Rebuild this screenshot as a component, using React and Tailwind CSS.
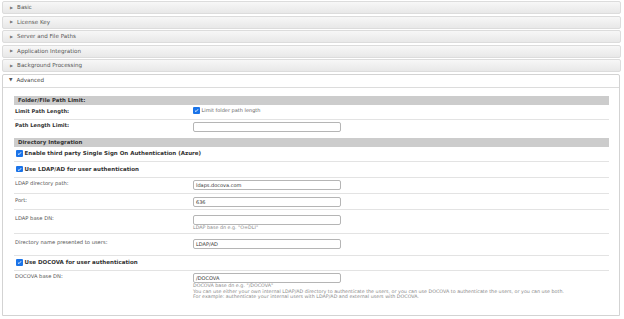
import React from 'react';

const font = { fontFamily: '"DejaVu Sans", Verdana, sans-serif' };

const sections = ['Basic', 'License Key', 'Server and File Paths', 'Application Integration', 'Background Processing'];

// small chrome-like checked box
const Check = () => (
  <span className="inline-flex items-center justify-center w-[6.5px] h-[6.5px] rounded-[1px] bg-[#1a73e8] mr-[2px] shrink-0">
    <svg viewBox="0 0 8 8" className="w-[5px] h-[5px]">
      <path d="M1.5 4.2 L3.2 5.8 L6.5 2" stroke="white" strokeWidth="1.4" fill="none" />
    </svg>
  </span>
);

const Input = ({ value }) => (
  <div className="w-[148px] h-[10px] border border-[#b5b5b5] rounded-[2px] bg-white text-[5px] leading-[8px] pl-[2px] text-[#333]">
    {value}
  </div>
);

const SubHeader = ({ children, h }) => (
  <div className={`bg-[#cccccc] text-[5.4px] font-bold text-[#333] pl-[4px] flex items-center ${h}`}>{children}</div>
);

const Row = ({ label, bold, children, h, pt, border = true }) => (
  <div className={`flex ${h} ${border ? 'border-b border-[#e3e3e3]' : ''}`}>
    <div className={`w-[179px] pl-[1px] ${pt} text-[5.2px] leading-[6px] ${bold ? 'font-bold text-[#333]' : 'text-[#555]'}`}>
      {label}
    </div>
    <div className={`flex-1 ${pt}`}>{children}</div>
  </div>
);

const CheckRow = ({ label, h }) => (
  <div className={`flex items-center ${h} border-b border-[#e3e3e3] pl-[2px]`}>
    <Check />
    <span className="text-[5.5px] font-bold text-[#333]">{label}</span>
  </div>
);

const Hint = ({ children }) => <div className="text-[4.8px] leading-[5.7px] text-[#888] whitespace-nowrap">{children}</div>;

export default function App() {
  return (
    <div className="w-[624px] h-[319px] bg-white pt-[1px] pl-[2px] pr-[3px]" style={font}>
      <div className="flex flex-col gap-[1.5px]">
        {sections.map((s) => (
          <div
            key={s}
            className="h-[13px] border border-[#dcdcdc] rounded-[2px] bg-gradient-to-b from-[#f7f7f7] to-[#e8e8e8] flex items-center pl-[7px] text-[5.6px] text-[#555]"
          >
            <span className="text-[4px] mr-[4px] text-[#777]">▶</span>
            {s}
          </div>
        ))}
      </div>
      <div className="mt-[1.5px] mr-[1px] border border-[#d3d3d3] rounded-t-[2px]">
        <div className="h-[13px] border-b border-[#dcdcdc] flex items-center pl-[6px] text-[5.6px] text-[#444]">
          <span className="text-[4.5px] mr-[4px] text-[#555]">▼</span>
          Advanced
        </div>
        <div className="pl-[11px] pr-[10px] pt-[8px] h-[227px]">
          <SubHeader h="h-[9px]">Folder/File Path Limit:</SubHeader>
          <Row label="Limit Path Length:" bold h="h-[15px]" pt="pt-[3px]">
            <div className="flex items-center h-[6px]">
              <Check />
              <span className="text-[5px] text-[#666]">Limit folder path length</span>
            </div>
          </Row>
          <Row label="Path Length Limit:" bold h="h-[18px]" pt="pt-[2px]" border={false}>
            <Input value="" />
          </Row>
          <SubHeader h="h-[9px]">Directory Integration</SubHeader>
          <CheckRow label="Enable third party Single Sign On Authentication (Azure)" h="h-[15px]" />
          <CheckRow label="Use LDAP/AD for user authentication" h="h-[16px]" />
          <Row label="LDAP directory path:" h="h-[16px]" pt="pt-[2px]">
            <Input value="ldaps.docova.com" />
          </Row>
          <Row label="Port:" h="h-[16px]" pt="pt-[3px]">
            <Input value="636" />
          </Row>
          <Row label="LDAP base DN:" h="h-[24px]" pt="pt-[5px]">
            <Input value="" />
            <Hint>LDAP base dn e.g. "O=DLI"</Hint>
          </Row>
          <Row label="Directory name presented to users:" h="h-[22px]" pt="pt-[5px]">
            <Input value="LDAP/AD" />
          </Row>
          <CheckRow label="Use DOCOVA for user authentication" h="h-[15px]" />
          <Row label="DOCOVA base DN:" h="h-[34px]" pt="pt-[2px]" border={false}>
            <Input value="/DOCOVA" />
            <div className="mt-[0.5px]">
              <Hint>DOCOVA base dn e.g. "/DOCOVA"</Hint>
              <Hint>
                You can use either your own internal LDAP/AD directory to authenticate the users, or you can use DOCOVA to authenticate the users, or you can use both.
              </Hint>
              <Hint>For example: authenticate your internal users with LDAP/AD and external users with DOCOVA.</Hint>
            </div>
          </Row>
        </div>
      </div>
    </div>
  );
}
